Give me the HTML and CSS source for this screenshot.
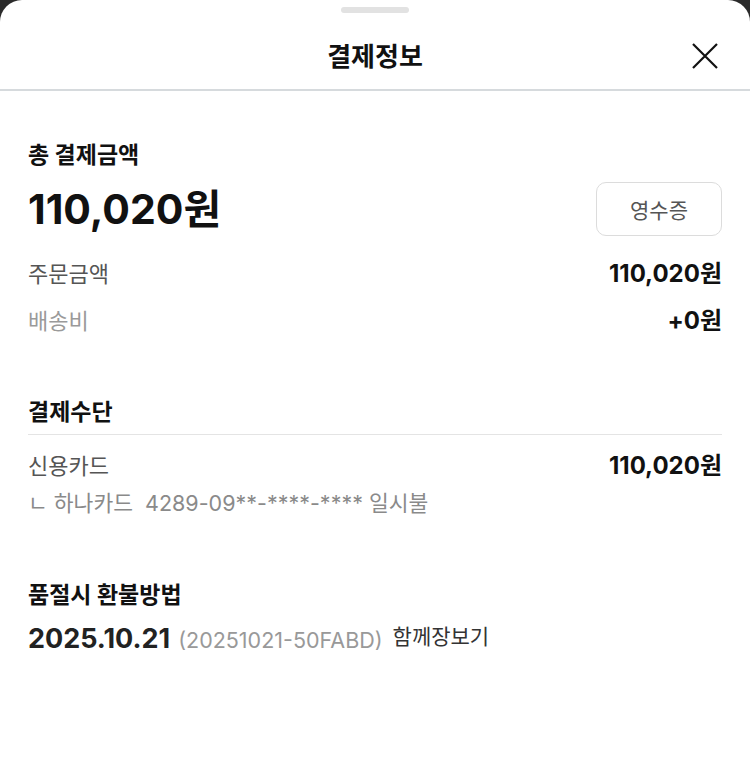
FILE: index.html
```html
<!DOCTYPE html>
<html lang="ko">
<head>
<meta charset="utf-8">
<link rel="stylesheet" href="styles.css">
</head>
<body>
<div class="sheet">
  <div class="handle-wrap"><div class="handle"></div></div>
  <header class="header">
    <h1 class="title">결제정보</h1>
    <button class="close" aria-label="닫기">
      <svg width="28" height="28" viewBox="0 0 28 28"><path d="M2 2 L26 26 M26 2 L2 26" stroke="#111" stroke-width="2.2" fill="none"/></svg>
    </button>
  </header>
  <main class="content">
    <section class="sec sec-total">
      <h2 class="sec-title">총 결제금액</h2>
      <div class="total-row">
        <div class="total-amount">110,020원</div>
        <button class="receipt">영수증</button>
      </div>
      <div class="row row-order">
        <span class="label">주문금액</span>
        <span class="value">110,020원</span>
      </div>
      <div class="row row-ship">
        <span class="label light">배송비</span>
        <span class="value">+0원</span>
      </div>
    </section>
    <section class="sec sec-method">
      <h2 class="sec-title ruled">결제수단</h2>
      <div class="row row-card">
        <span class="label">신용카드</span>
        <span class="value">110,020원</span>
      </div>
      <div class="card-detail">ㄴ 하나카드&nbsp; 4289-09**-****-**** 일시불</div>
    </section>
    <section class="sec sec-refund">
      <h2 class="sec-title">품절시 환불방법</h2>
      <div class="refund-row">
        <span class="date">2025.10.21</span>
        <span class="order-no">(20251021-50FABD)</span>
        <span class="store">함께장보기</span>
      </div>
    </section>
  </main>
</div>
</body>
</html>
```
FILE: styles.css
```css
* { box-sizing: border-box; }
html, body { margin: 0; padding: 0; }
body {
  background: #2b2b2b;
  font-family: Inter, "Noto Sans CJK KR", sans-serif;
  color: #111;
}
.sheet {
  background: #fff;
  width: 750px;
  height: 769px;
  border-radius: 22px 22px 0 0;
  overflow: hidden;
}
.handle-wrap { display: flex; justify-content: center; padding-top: 7px; }
.handle { width: 68px; height: 6px; border-radius: 3px; background: #e2e2e2; }
.header {
  height: 78px;
  display: flex;
  align-items: center;
  justify-content: center;
  position: relative;
  border-bottom: 2px solid #d6dadd;
  padding-top: 12px;
}
.title {
  margin: 0;
  font-size: 26px;
  line-height: 34px;
  font-weight: 700;
  color: #111;
}
.close {
  position: absolute;
  right: 31px;
  top: 29px;
  border: 0;
  background: none;
  padding: 0;
  width: 28px;
  height: 28px;
  display: block;
}
.close svg { display: block; }
.content { padding: 0 28px; }
.sec-title {
  margin: 0;
  font-size: 23px;
  font-weight: 700;
  color: #111;
  line-height: 30px;
}
.sec-total { padding-top: 49px; }
.total-row {
  display: flex;
  justify-content: space-between;
  align-items: center;
  margin-top: 11px;
}
.total-amount {
  font-size: 41px;
  font-weight: 700;
  color: #111;
  line-height: 56px;
}
.receipt {
  width: 126px;
  height: 54px;
  border: 1.5px solid #dcdcdc;
  border-radius: 10px;
  background: #fff;
  font-family: inherit;
  font-size: 21px;
  color: #555;
}
.row {
  display: flex;
  justify-content: space-between;
  align-items: center;
  line-height: 28px;
  font-size: 22px;
}
.row-order { margin-top: 23px; }
.row-ship { margin-top: 19px; }
.label { color: #555; }
.label.light { color: #9a9a9a; }
.value { font-weight: 700; color: #111; font-size: 24px; }
.sec-method { padding-top: 62px; }
.ruled { padding-bottom: 7px; border-bottom: 1.5px solid #e4e4e4; }
.row-card { margin-top: 17px; }
.card-detail {
  margin-top: 9px;
  font-size: 21.5px;
  color: #8a8a8a;
  line-height: 28px;
}
.sec-refund { padding-top: 63px; }
.refund-row {
  margin-top: 12px;
  display: flex;
  align-items: baseline;
  gap: 9px;
}
.date { font-size: 27px; font-weight: 700; color: #222; }
.order-no { font-size: 21.5px; color: #999; margin-left: -1px; }
.store { font-size: 21px; color: #333; position: relative; top: -4px; margin-left: 1px; }
```
